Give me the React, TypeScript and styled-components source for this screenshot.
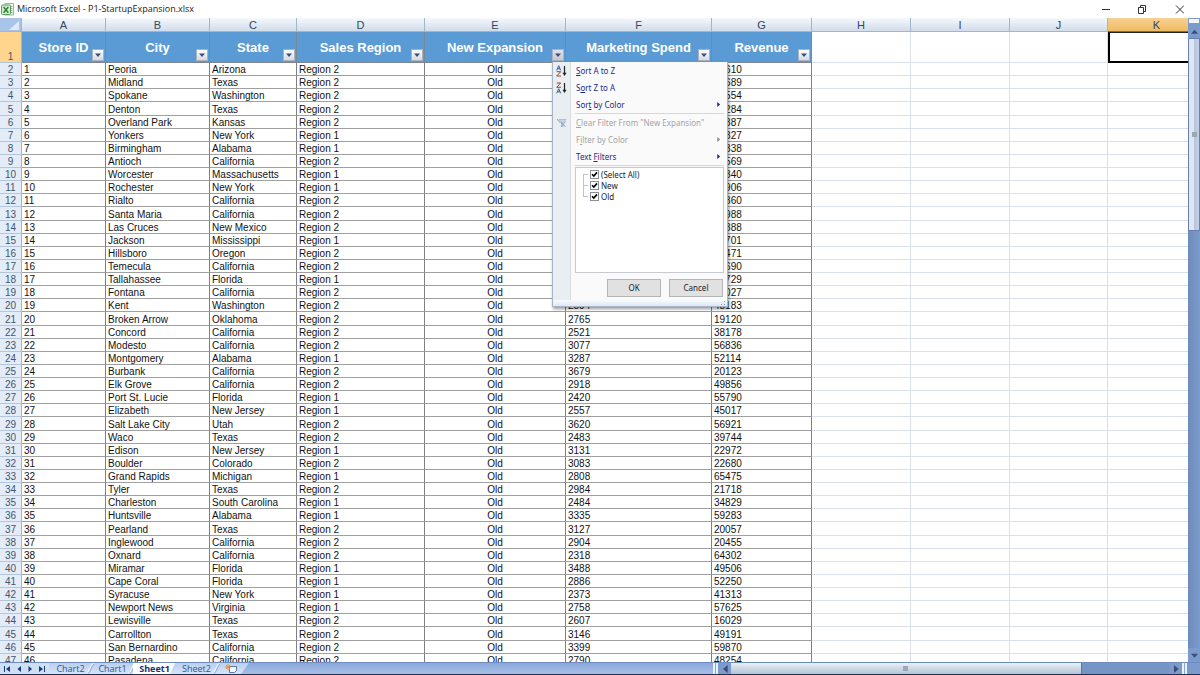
import React from "react";
import styled, { createGlobalStyle, css } from "styled-components";

const GlobalStyle = createGlobalStyle`
  *, *::before, *::after { box-sizing: border-box; }
  html, body { margin: 0; padding: 0; background: #fff; }
  button, input { font: inherit; margin: 0; }
`;

const UI_FONT = `"Open Sans", "Noto Sans", sans-serif`;
const MENU_FONT = `"Noto Sans", "Open Sans", sans-serif`;

/* ---------- data ---------- */

type Column = { letter: string; title?: string; width?: number };

const columns: Column[] = [
  { letter: "A", title: "Store ID", width: 84 },
  { letter: "B", title: "City", width: 104 },
  { letter: "C", title: "State", width: 87 },
  { letter: "D", title: "Sales Region", width: 128 },
  { letter: "E", title: "New Expansion", width: 141 },
  { letter: "F", title: "Marketing Spend", width: 146 },
  { letter: "G", title: "Revenue", width: 100 },
  { letter: "H", width: 99 },
  { letter: "I", width: 99 },
  { letter: "J", width: 98 },
  { letter: "K" },
];

// city, state, region, marketing spend, revenue
type Store = [string, string, number, number | null, number];

const stores: Store[] = [
  ["Peoria", "Arizona", 2, null, 48610],
  ["Midland", "Texas", 2, null, 45689],
  ["Spokane", "Washington", 2, null, 49554],
  ["Denton", "Texas", 2, null, 38284],
  ["Overland Park", "Kansas", 2, null, 59887],
  ["Yonkers", "New York", 1, null, 59827],
  ["Birmingham", "Alabama", 1, null, 18338],
  ["Antioch", "California", 2, null, 24569],
  ["Worcester", "Massachusetts", 1, null, 31840],
  ["Rochester", "New York", 1, null, 16906],
  ["Rialto", "California", 2, null, 34360],
  ["Santa Maria", "California", 2, null, 32988],
  ["Las Cruces", "New Mexico", 2, null, 52888],
  ["Jackson", "Mississippi", 1, null, 58701],
  ["Hillsboro", "Oregon", 2, null, 56471],
  ["Temecula", "California", 2, null, 21690],
  ["Tallahassee", "Florida", 1, null, 42729],
  ["Fontana", "California", 2, null, 37027],
  ["Kent", "Washington", 2, 2894, 48183],
  ["Broken Arrow", "Oklahoma", 2, 2765, 19120],
  ["Concord", "California", 2, 2521, 38178],
  ["Modesto", "California", 2, 3077, 56836],
  ["Montgomery", "Alabama", 1, 3287, 52114],
  ["Burbank", "California", 2, 3679, 20123],
  ["Elk Grove", "California", 2, 2918, 49856],
  ["Port St. Lucie", "Florida", 1, 2420, 55790],
  ["Elizabeth", "New Jersey", 1, 2557, 45017],
  ["Salt Lake City", "Utah", 2, 3620, 56921],
  ["Waco", "Texas", 2, 2483, 39744],
  ["Edison", "New Jersey", 1, 3131, 22972],
  ["Boulder", "Colorado", 2, 3083, 22680],
  ["Grand Rapids", "Michigan", 1, 2808, 65475],
  ["Tyler", "Texas", 2, 2984, 21718],
  ["Charleston", "South Carolina", 1, 2484, 34829],
  ["Huntsville", "Alabama", 1, 3335, 59283],
  ["Pearland", "Texas", 2, 3127, 20057],
  ["Inglewood", "California", 2, 2904, 20455],
  ["Oxnard", "California", 2, 2318, 64302],
  ["Miramar", "Florida", 1, 3488, 49506],
  ["Cape Coral", "Florida", 1, 2886, 52250],
  ["Syracuse", "New York", 1, 2373, 41313],
  ["Newport News", "Virginia", 1, 2758, 57625],
  ["Lewisville", "Texas", 2, 2607, 16029],
  ["Carrollton", "Texas", 2, 3146, 49191],
  ["San Bernardino", "California", 2, 3399, 59870],
  ["Pasadena", "California", 2, 2790, 48254],
];

/* ---------- window ---------- */

const Window = styled.div`
  display: flex;
  flex-direction: column;
  height: 100vh;
  overflow: hidden;
  background: #fff;
  border-bottom: 1px solid #1f3050;
  font-family: "Liberation Sans", Arial, sans-serif;
`;

const TitleBar = styled.header`
  display: flex;
  align-items: center;
  flex: none;
  height: 18px;
  padding: 0 16px 0 1px;
  gap: 3px;
`;

const Title = styled.h1`
  flex: 1;
  margin: 0;
  font: 400 9px/18px ${UI_FONT};
  color: #222;
`;

const WindowControls = styled.div`
  display: flex;
  gap: 25px;
`;

const WindowButton = styled.button`
  display: flex;
  padding: 0;
  border: 0;
  background: none;
`;

const Workspace = styled.main`
  display: flex;
  flex: 1;
  min-height: 0;
`;

const SheetArea = styled.div`
  flex: 1;
  min-width: 0;
  overflow: hidden;
`;

/* ---------- sheet ---------- */

const Sheet = styled.table`
  table-layout: fixed;
  width: calc(100% + 18px);
  min-width: 1206px;
  border-collapse: separate;
  border-spacing: 0;
  font-size: 10px;
  line-height: 11px;
  color: #111;

  tbody tr { height: 13px; }
  tbody tr:nth-child(8n + 4) { height: 14px; }
`;

const Corner = styled.th`
  padding: 0 2px 1px 0;
  background: #a9c4e9;
  border-right: 1px solid #9eb6ce;
  border-bottom: 1px solid #9eb6ce;
  vertical-align: bottom;
  text-align: right;

  svg { display: block; margin-left: auto; }
`;

const ColumnLetter = styled.th<{ $active?: boolean }>`
  height: 14px;
  padding: 1px 0 0;
  font-weight: 400;
  font-size: 11px;
  line-height: 12px;
  color: #33475f;
  background: ${(p) =>
    p.$active
      ? "linear-gradient(#f8d094, #f0bb62)"
      : "linear-gradient(#f6f9fc, #e4ebf4 45%, #d3dcea)"};
  border-right: 1px solid #9eb6ce;
  border-bottom: 1px solid ${(p) => (p.$active ? "#8a6a35" : "#9eb6ce")};
`;

const RowNumber = styled.th<{ $active?: boolean }>`
  padding: 1px 0 0;
  font-weight: 400;
  color: #3f566f;
  text-align: center;
  vertical-align: ${(p) => (p.$active ? "bottom" : "middle")};
  background: ${(p) => (p.$active ? "#ffd58d" : "#e4ecf7")};
  border-right: 1px solid #9eb6ce;
  border-bottom: 1px solid #b4c6dc;
`;

const FieldHeader = styled.th`
  position: relative;
  height: 31px;
  padding: 2px 0 0;
  font-size: 13px;
  line-height: 28px;
  color: #fff;
  background: #5b9bd5;
  border-right: 1px solid #7b8794;
  border-bottom: 1px solid #7b8794;
`;

const cellBase = css`
  padding: 1px 2px 0;
  overflow: hidden;
  white-space: nowrap;
`;

const Cell = styled.td<{ $center?: boolean }>`
  ${cellBase}
  text-align: ${(p) => (p.$center ? "center" : "left")};
  border-right: 1px solid #808080;
  border-bottom: 1px solid #a0a0a0;
`;

const EmptyCell = styled.td`
  ${cellBase}
  border-right: 1px solid #d9dfeb;
  border-bottom: 1px solid #d9dfeb;
`;

const SelectedCell = styled.td`
  padding: 0;
  border: 2px solid #000;
  border-top: 1px solid #222;
`;

/* ---------- filter ---------- */

const FilterAnchor = styled.div`
  position: absolute;
  right: 0;
  bottom: 0;
  width: 13px;
  height: 13px;
`;

const FilterButton = styled.button<{ $open?: boolean }>`
  display: flex;
  align-items: center;
  justify-content: center;
  width: 12px;
  height: 12px;
  padding: 0;
  border: 1px solid #aab3c0;
  background: ${(p) =>
    p.$open ? "linear-gradient(#dfe3e8, #c3cad4)" : "linear-gradient(#fdfdfe, #d5dae2)"};
`;

const Menu = styled.div`
  position: absolute;
  z-index: 2;
  top: 100%;
  left: 0;
  width: 176px;
  border: 1px solid #a9b4c4;
  border-top: 0;
  background: #fafafb;
  box-shadow: 1px 2px 3px rgba(0, 0, 0, 0.4);
  font: 400 8px/17px ${MENU_FONT};
  text-align: left;
`;

const MenuBody = styled.div`
  padding: 0 3px 3px 0;
  background: linear-gradient(90deg, #e9eef0 17px, #d6dde0 17px, #d6dde0 18px, transparent 18px);
`;

const MenuItem = styled.button`
  display: grid;
  grid-template-columns: 23px 1fr 8px;
  align-items: center;
  width: 100%;
  height: 17px;
  padding: 0;
  border: 0;
  background: none;
  text-align: left;
  white-space: nowrap;
  color: #23298a;

  &:disabled { color: #a3a3a6; }

  svg { display: block; }
  > :first-child { margin-left: 2px; }
`;

const Separator = styled.hr`
  height: 1px;
  margin: 0 0 0 22px;
  border: 0;
  background: #d3d6da;
`;

const ValueList = styled.fieldset`
  height: 106px;
  min-width: 0;
  margin: 1px 0 6px 22px;
  padding: 1px 0 0 7px;
  border: 1px solid #c6c9ce;
  background: #fff;
`;

const ValueRow = styled.label<{ $last?: boolean; $root?: boolean }>`
  display: flex;
  align-items: center;
  gap: 2px;
  height: 11px;
  line-height: 11px;
  color: #222;

  &::before {
    content: "";
    align-self: ${(p) => (p.$root ? "flex-end" : "flex-start")};
    width: 5px;
    height: ${(p) => (p.$root || p.$last ? "6px" : "11px")};
    border-left: 1px solid #c2c2c2;
    ${(p) => p.$root && "border-top: 1px solid #c2c2c2;"}
    ${(p) => p.$last && "border-bottom: 1px solid #c2c2c2;"}
    ${(p) =>
      !p.$root &&
      !p.$last &&
      "background: linear-gradient(#c2c2c2, #c2c2c2) 0 5px / 100% 1px no-repeat;"}
  }
`;

const Tick = styled.input`
  appearance: none;
  width: 9px;
  height: 9px;
  border: 1px solid #8b8f96;
  background: #fff;

  &:checked {
    background: #fff
      url("data:image/svg+xml,%3Csvg xmlns='http://www.w3.org/2000/svg' viewBox='0 0 7 7'%3E%3Cpath d='M1 3.2 2.8 5 6 1.4' fill='none' stroke='%23000' stroke-width='1.6'/%3E%3C/svg%3E");
  }
`;

const MenuActions = styled.div`
  display: flex;
  justify-content: flex-end;
  gap: 8px;
  padding-right: 1px;
`;

const ActionButton = styled.button`
  width: 54px;
  height: 18px;
  padding: 0;
  border: 1px solid #b5b5b5;
  background: #e1e1e1;
  color: #222;
  line-height: 16px;
`;

const MenuGrip = styled.div`
  display: flex;
  justify-content: flex-end;
  align-items: flex-end;
  height: 6px;
  background: linear-gradient(#f8fbfd, #dce8f4);
`;

/* ---------- scroll bars ---------- */

const VScroll = styled.aside`
  display: flex;
  flex-direction: column;
  flex: none;
  width: 12px;
  background: linear-gradient(90deg, #6d8cbd, #7b9bca);
`;

const VSplit = styled.div`
  height: 6px;
  border: 1px solid #7f9cc8;
  background: #f2f6fb;
`;

const ScrollArrow = styled.button<{ $size: number; $across?: boolean }>`
  display: flex;
  flex: none;
  align-items: center;
  justify-content: center;
  ${(p) => (p.$across ? `width: ${p.$size}px;` : `height: ${p.$size}px;`)}
  padding: 0;
  border: 0;
  background: #7a9bcb;
`;

const VThumb = styled.div`
  display: flex;
  align-items: center;
  justify-content: center;
  height: 30%;
  border: 1px solid #6a7fb0;
  background: linear-gradient(90deg, #dfe9f0, #dde6f1 45%, #b7c5e0 55%, #c3d0e6);
`;

const Spring = styled.div`
  flex: 1;
`;

const ThumbGrip = styled.span`
  width: 5px;
  height: 5px;
  background: #99a9b5;
`;

const BottomBar = styled.footer`
  display: flex;
  flex: none;
  height: 12px;
  border-top: 1px solid #6f8cc0;
  background: #9db7e2;
`;

const TabStrip = styled.nav`
  display: flex;
  flex: 1;
  min-width: 0;
  background: linear-gradient(#8ba8da, #a6bfe8);
`;

const TabNav = styled.div`
  display: flex;
  align-items: center;
  justify-content: space-between;
  width: 49px;
  padding: 0 4px;
  background: #cfe0f5;
`;

const TabNavButton = styled.button`
  display: flex;
  padding: 0;
  border: 0;
  background: none;
`;

const Tabs = styled.div`
  display: flex;
  background: linear-gradient(#b9d0f0, #d5e4f7);
  clip-path: polygon(0 0, 100% 0, calc(100% - 8px) 100%, 0 100%);
`;

const Tab = styled.button<{ $active?: boolean }>`
  position: relative;
  width: 42px;
  padding: 0 0 0 1px;
  border: 0;
  background: ${(p) => (p.$active ? "#fff" : "none")};
  color: ${(p) => (p.$active ? "#16306e" : "#2f5597")};
  font: ${(p) => (p.$active ? 700 : 400)} 9px/11px ${UI_FONT};
  white-space: nowrap;
  clip-path: ${(p) => (p.$active ? "polygon(0 0, 100% 0, calc(100% - 5px) 100%, 0 100%)" : "none")};
`;

const TabEdge = styled.svg`
  position: absolute;
  right: -3px;
  top: 0;
`;

const AddTab = styled.button`
  display: flex;
  align-items: center;
  width: 32px;
  padding: 0 8px;
  border: 0;
  background: none;
`;

const HScroll = styled.div`
  display: flex;
  flex: none;
  width: calc(40% + 7px);
  min-width: 0;
  background: #7695c4;
`;

const HSplit = styled.div`
  width: 5px;
  border: 1px solid #eaf2fb;
  border-width: 0 2px;
  background: #8ba8d2;
`;

const HThumb = styled.div`
  display: flex;
  align-items: center;
  justify-content: center;
  width: 72%;
  border-right: 1px solid #5d78a6;
  background: linear-gradient(#eaf1f7, #cdd9e5 50%, #b6c4d4);
`;

/* ---------- drawings ---------- */

const ExcelLogo = () => (
  <svg width="13" height="13" viewBox="0 0 13 13" aria-hidden="true">
    <path d="M4 .5h8.500v11.500H4z" fill="#f4faf3" stroke="#8fbf8f" />
    <path d="M9 3.500h2.500M9 5.500h2.500M9 7.500h2.500M9 9.500h2.500" stroke="#8cc08c" />
    <rect x="0.5" y="2" width="9" height="9.500" rx="1" fill="#d3ecd0" stroke="#58a05b" />
    <path d="M2.600 4 7.300 9.800M7.300 4 2.600 9.800" stroke="#2d8434" strokeWidth="1.500" />
  </svg>
);

const Triangle = ({ d, color = "#3c4d78", size = 6 }: { d: "up" | "down" | "left" | "right"; color?: string; size?: number }) => {
  const shapes = {
    up: "M0 5 3 1.5 6 5z",
    down: "M0 1.5h6L3 5z",
    left: "M5 0v6L1.5 3z",
    right: "M1.5 0v6L5 3z",
  };
  return (
    <svg width={size} height={size} viewBox="0 0 6 6" aria-hidden="true">
      <path d={shapes[d]} fill={color} />
    </svg>
  );
};

const SortIcon = ({ reverse }: { reverse?: boolean }) => (
  <svg width="14" height="12" viewBox="0 0 14 12" aria-hidden="true">
    <g fill="none" strokeWidth="1">
      <path
        d="M1.700 5.300 3.700.7 5.700 5.300M2.400 3.800h2.600"
        stroke={reverse ? "#a33a3a" : "#3d5a9c"}
        opacity={reverse ? 0 : 1}
      />
      <path d="M1.700 6.700h4L1.700 11h4.300" stroke="#a33a3a" opacity={reverse ? 0 : 1} />
      <path d="M1.700 1h4L1.700 5.300h4.300" stroke="#a33a3a" opacity={reverse ? 1 : 0} />
      <path d="M1.700 11.300 3.700 6.700 5.700 11.300M2.400 9.800h2.600" stroke="#3d5a9c" opacity={reverse ? 1 : 0} />
    </g>
    <path d="M9.500 1v8" stroke="#222" strokeWidth="1.200" />
    <path d="M7.500 7.800h4l-2 3.200z" fill="#222" />
  </svg>
);

const ClearFilterIcon = () => (
  <svg width="14" height="12" viewBox="0 0 14 12" aria-hidden="true">
    <path d="M4 2.500h7L8 5.500v4L6.500 8.500v-3z" fill="#c8d6e9" stroke="#9db2d0" strokeWidth="0.7" />
    <path d="M2 2 5.500 6M6 5l4.500 5M10.500 4.500 6 10" stroke="#8ba0c6" strokeWidth="1" />
  </svg>
);

/* ---------- parts ---------- */

const FilterMenu = () => (
  <Menu>
    <MenuBody>
      <MenuItem><SortIcon /><span><u>S</u>ort A to Z</span></MenuItem>
      <MenuItem><SortIcon reverse /><span>S<u>o</u>rt Z to A</span></MenuItem>
      <MenuItem><span /><span>Sor<u>t</u> by Color</span><Triangle d="right" color="#23298a" size={5} /></MenuItem>
      <Separator />
      <MenuItem disabled><ClearFilterIcon /><span><u>C</u>lear Filter From "New Expansion"</span></MenuItem>
      <MenuItem disabled><span /><span>F<u>i</u>lter by Color</span><Triangle d="right" color="#8c8c90" size={5} /></MenuItem>
      <MenuItem><span /><span>Text <u>F</u>ilters</span><Triangle d="right" color="#23298a" size={5} /></MenuItem>
      <Separator />
      <ValueList aria-label="Values">
        <ValueRow $root><Tick type="checkbox" defaultChecked />(Select All)</ValueRow>
        <ValueRow><Tick type="checkbox" defaultChecked />New</ValueRow>
        <ValueRow $last><Tick type="checkbox" defaultChecked />Old</ValueRow>
      </ValueList>
      <MenuActions>
        <ActionButton>OK</ActionButton>
        <ActionButton>Cancel</ActionButton>
      </MenuActions>
    </MenuBody>
    <MenuGrip>
      <svg width="7" height="6" viewBox="0 0 7 6" aria-hidden="true">
        <path d="M4 1h1v1H4zM4 4h1v1H4zM1 4h1v1H1z" fill="#8296b4" />
      </svg>
    </MenuGrip>
  </Menu>
);

const HeaderCell = ({ column }: { column: Column }) => {
  const open = column.letter === "E";
  return (
    <FieldHeader scope="col">
      {column.title}
      <FilterAnchor>
        <FilterButton $open={open} aria-label={`Filter ${column.title}`} aria-expanded={open}>
          <Triangle d="down" />
        </FilterButton>
        {open && <FilterMenu />}
      </FilterAnchor>
    </FieldHeader>
  );
};

const StoreRow = ({ store, id }: { store: Store; id: number }) => {
  const [city, state, region, spend, revenue] = store;
  return (
    <tr>
      <RowNumber scope="row">{id + 1}</RowNumber>
      <Cell>{id}</Cell>
      <Cell>{city}</Cell>
      <Cell>{state}</Cell>
      <Cell>Region {region}</Cell>
      <Cell $center>Old</Cell>
      <Cell>{spend}</Cell>
      <Cell>{revenue}</Cell>
      <EmptyCell /><EmptyCell /><EmptyCell /><EmptyCell />
    </tr>
  );
};

const SheetTab = ({ name, active }: { name: string; active?: boolean }) => (
  <Tab $active={active}>
    {name}
    {!active && (
      <TabEdge width="8" height="11" viewBox="0 0 8 11" aria-hidden="true">
        <path d="M7.5 0C4 2 4 9 0 11" fill="none" stroke="#eef5fd" strokeWidth="1.4" />
        <path d="M8 1C5 3 5 9 1.5 11" fill="none" stroke="#7d98c6" strokeWidth="0.8" />
      </TabEdge>
    )}
  </Tab>
);

export default function App() {
  return (
    <Window>
      <GlobalStyle />
      <TitleBar>
        <ExcelLogo />
        <Title>Microsoft Excel - P1-StartupExpansion.xlsx</Title>
        <WindowControls>
          <WindowButton aria-label="Minimize">
            <svg width="12" height="9" viewBox="0 0 12 9"><path d="M4 4.500h8" stroke="#333" /></svg>
          </WindowButton>
          <WindowButton aria-label="Restore">
            <svg width="12" height="9" viewBox="0 0 12 9">
              <path d="M3.500 2.500h5v6h-5zM5.500 2.500v-2h5v6h-2" fill="none" stroke="#333" />
            </svg>
          </WindowButton>
          <WindowButton aria-label="Close">
            <svg width="12" height="9" viewBox="0 0 12 9"><path d="m4 .5 8 8M12 .5l-8 8" stroke="#333" /></svg>
          </WindowButton>
        </WindowControls>
      </TitleBar>

      <Workspace>
        <SheetArea>
          <Sheet>
            <colgroup>
              <col width={22} />
              {columns.map((c) => <col key={c.letter} width={c.width} />)}
            </colgroup>
            <thead>
              <tr>
                <Corner>
                  <svg width="10" height="9" viewBox="0 0 10 9" aria-hidden="true"><path d="M10 0v9H0z" fill="#dfeaf8" /></svg>
                </Corner>
                {columns.map((c) => (
                  <ColumnLetter key={c.letter} scope="col" $active={c.letter === "K"}>{c.letter}</ColumnLetter>
                ))}
              </tr>
              <tr>
                <RowNumber scope="row" $active>1</RowNumber>
                {columns.slice(0, 7).map((c) => <HeaderCell key={c.letter} column={c} />)}
                <EmptyCell /><EmptyCell /><EmptyCell />
                <SelectedCell />
              </tr>
            </thead>
            <tbody>
              {stores.map((s, i) => <StoreRow key={s[0]} store={s} id={i + 1} />)}
            </tbody>
          </Sheet>
        </SheetArea>
        <VScroll>
          <VSplit />
          <ScrollArrow $size={14} aria-label="Scroll up"><Triangle d="up" size={7} /></ScrollArrow>
          <VThumb><ThumbGrip /></VThumb>
          <Spring />
          <ScrollArrow $size={14} aria-label="Scroll down"><Triangle d="down" size={7} /></ScrollArrow>
        </VScroll>
      </Workspace>

      <BottomBar>
        <TabStrip>
          <TabNav>
            <TabNavButton aria-label="First sheet">
              <svg width="6" height="6" viewBox="0 0 6 6"><path d="M0 0h1v6H0zM6 0v6L2 3z" fill="#1d3a7a" /></svg>
            </TabNavButton>
            <TabNavButton aria-label="Previous sheet"><Triangle d="left" color="#1d3a7a" /></TabNavButton>
            <TabNavButton aria-label="Next sheet"><Triangle d="right" color="#1d3a7a" /></TabNavButton>
            <TabNavButton aria-label="Last sheet">
              <svg width="6" height="6" viewBox="0 0 6 6"><path d="M5 0h1v6H5zM0 0v6l4-3z" fill="#1d3a7a" /></svg>
            </TabNavButton>
          </TabNav>
          <Tabs>
            <SheetTab name="Chart2" />
            <SheetTab name="Chart1" />
            <SheetTab name="Sheet1" active />
            <SheetTab name="Sheet2" />
            <AddTab aria-label="Insert sheet">
              <svg width="12" height="10" viewBox="0 0 12 10" aria-hidden="true">
                <path d="M4.5 2.5h7v4l-2 2h-5z" fill="#f4f8fd" stroke="#51699a" strokeWidth="0.9" />
                <path d="M3 0v6M0 3h6M1 1l4 4M5 1 1 5" stroke="#e6932b" strokeWidth="0.9" />
              </svg>
            </AddTab>
          </Tabs>
        </TabStrip>
        <HScroll>
          <HSplit />
          <ScrollArrow $size={13} $across aria-label="Scroll left"><Triangle d="left" size={8} /></ScrollArrow>
          <HThumb><ThumbGrip /></HThumb>
          <Spring />
          <ScrollArrow $size={13} $across aria-label="Scroll right"><Triangle d="right" size={8} /></ScrollArrow>
          <HSplit />
          <ScrollArrow $size={13} $across aria-hidden="true" tabIndex={-1} />
        </HScroll>
      </BottomBar>
    </Window>
  );
}
